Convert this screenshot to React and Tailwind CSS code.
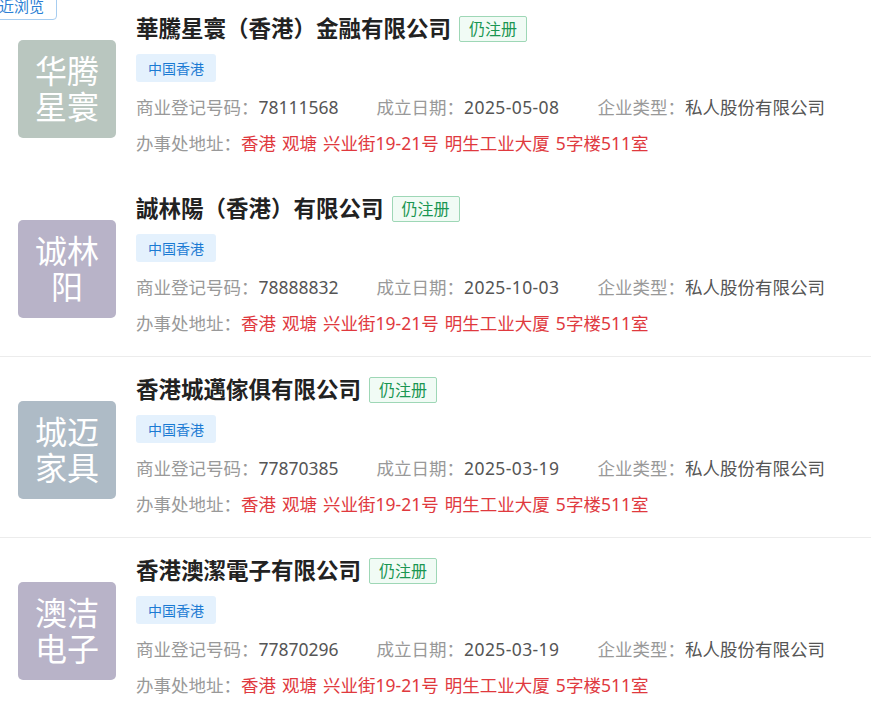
import React from 'react';

const companies = [
  {
    name: '華騰星寰（香港）金融有限公司',
    logo: ['华腾', '星寰'],
    logoColor: 'bg-[#b9c6bf]',
    regNo: '78111568',
    founded: '2025-05-08',
    divider: false,
  },
  {
    name: '誠林陽（香港）有限公司',
    logo: ['诚林', '阳'],
    logoColor: 'bg-[#b8b3c8]',
    regNo: '78888832',
    founded: '2025-10-03',
    divider: false,
  },
  {
    name: '香港城邁傢俱有限公司',
    logo: ['城迈', '家具'],
    logoColor: 'bg-[#aebbc6]',
    regNo: '77870385',
    founded: '2025-03-19',
    divider: true,
  },
  {
    name: '香港澳潔電子有限公司',
    logo: ['澳洁', '电子'],
    logoColor: 'bg-[#b8b3c8]',
    regNo: '77870296',
    founded: '2025-03-19',
    divider: true,
  },
];

const ADDRESS = '香港 观塘 兴业街19-21号 明生工业大厦 5字楼511室';

const CompanyRow = ({ company }) => (
  <div
    className={`flex items-center pl-[18px] pr-4 pt-5 pb-[15px] ${
      company.divider ? 'border-t border-[#ececec]' : ''
    }`}
  >
    {/* text logo */}
    <div
      className={`w-[98px] h-[98px] shrink-0 rounded-[5px] ${company.logoColor} flex flex-col items-center justify-center text-white text-[32px] leading-[36px]`}
    >
      {company.logo.map((line) => (
        <span key={line}>{line}</span>
      ))}
    </div>

    <div className="ml-5 flex flex-col min-w-0">
      <div className="flex items-center h-[26px]">
        <h3 className="text-[22.5px] leading-[26px] font-bold text-[#222] whitespace-nowrap">
          {company.name}
        </h3>
        <span className="ml-2 h-[26px] px-[9px] flex items-center text-[16px] text-[#1a9652] bg-[#f1fbf5] border border-[#9ed7b6] rounded-[2px]">
          仍注册
        </span>
      </div>

      <div className="mt-3 flex">
        <span className="h-7 px-3 flex items-center text-[14px] text-[#1b7ad3] bg-[#e4f1fd] rounded-[3px]">
          中国香港
        </span>
      </div>

      <div className="mt-[7px] flex gap-[38px] text-[17.5px] leading-[36px] whitespace-nowrap">
        <span>
          <span className="text-[#999]">商业登记号码：</span>
          <span className="text-[#555]">{company.regNo}</span>
        </span>
        <span>
          <span className="text-[#999]">成立日期：</span>
          <span className="text-[#555] tracking-[0.4px]">{company.founded}</span>
        </span>
        <span>
          <span className="text-[#999]">企业类型：</span>
          <span className="text-[#555]">私人股份有限公司</span>
        </span>
      </div>

      <div className="text-[17.5px] leading-[36px] whitespace-nowrap">
        <span className="text-[#999]">办事处地址：</span>
        <span className="text-[#e0393e] [word-spacing:1.5px]">{ADDRESS}</span>
      </div>
    </div>
  </div>
);

export default function App() {
  return (
    <div
      className="relative w-[871px] h-[716px] overflow-hidden bg-white"
      style={{ fontFamily: '"Noto Sans", "Noto Sans CJK SC", sans-serif' }}
    >
      <div className="-mt-[4px]">
        {companies.map((c) => (
          <CompanyRow key={c.name} company={c} />
        ))}
      </div>

      {/* floating history button */}
      <button className="absolute left-[-29px] top-[-8px] px-3 py-[3px] text-[15px] leading-5 text-[#2b7fd4] bg-white border border-[#a7cdf0] rounded-[4px]">
        最近浏览
      </button>
    </div>
  );
}
